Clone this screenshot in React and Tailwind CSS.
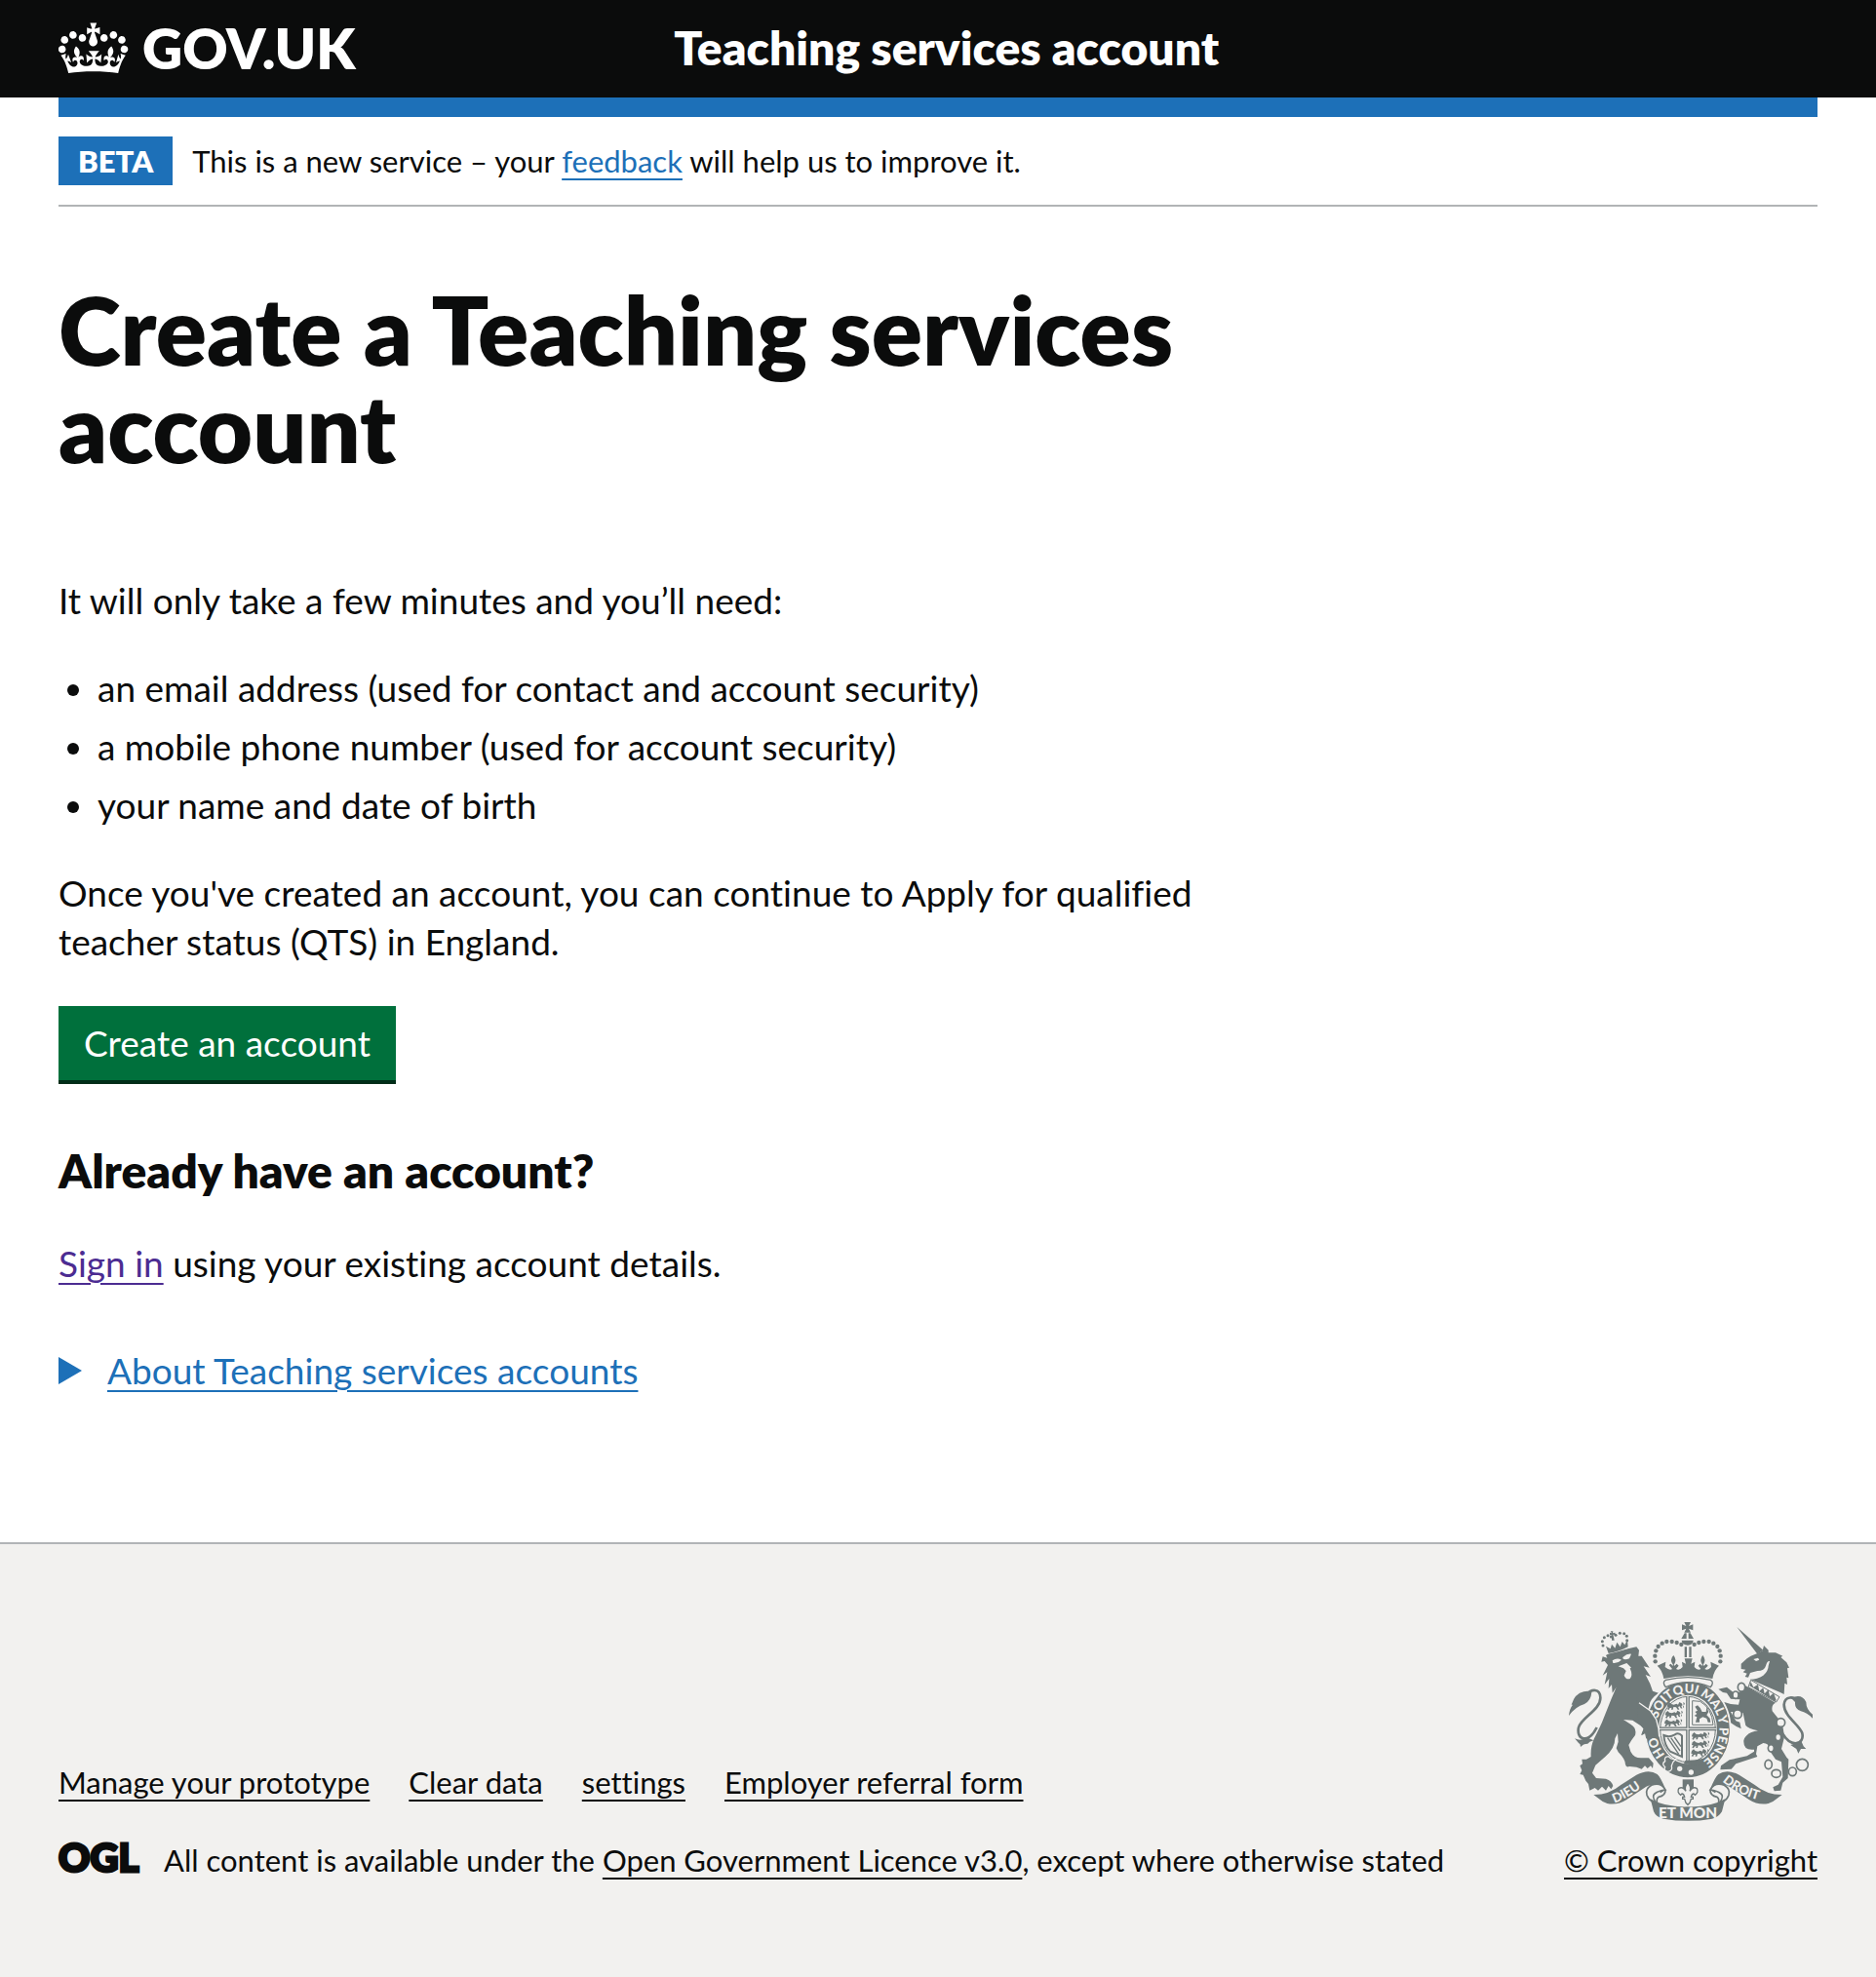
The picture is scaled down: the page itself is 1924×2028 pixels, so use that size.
const FOOTER_LINKS = ["Manage your prototype", "Clear data", "settings", "Employer referral form"];

const REQUIREMENTS = [
  "an email address (used for contact and account security)",
  "a mobile phone number (used for account security)",
  "your name and date of birth",
];

const link = "underline decoration-2 underline-offset-[6px]";

function Crown() {
  return (
    <svg className="h-16 w-[72px] shrink-0 fill-white" viewBox="0 1 36 32" aria-hidden="true">
      <path d="M6.7 12.2c1 .4 2.1-.1 2.5-1s-.1-2.1-1-2.5c-1-.4-2.1.1-2.5 1-.4 1 0 2.1 1 2.5m-4.3 2.5c1 .4 2.1-.1 2.5-1s-.1-2.1-1-2.5c-1-.4-2.1.1-2.5 1-.5 1 0 2.1 1 2.5m-1.3 4.8c1 .4 2.1-.1 2.5-1 .4-1-.1-2.1-1-2.5-1-.4-2.1.1-2.5 1-.4 1 0 2.1 1 2.5m10.4-5.8c1 .4 2.1-.1 2.5-1s-.1-2.1-1-2.5c-1-.4-2.1.1-2.5 1s0 2.1 1 2.5m17.4-1.5c-1 .4-2.1-.1-2.5-1s.1-2.1 1-2.5c1-.4 2.1.1 2.5 1 .5 1 0 2.1-1 2.5m4.3 2.5c-1 .4-2.1-.1-2.5-1s.1-2.1 1-2.5c1-.4 2.1.1 2.5 1 .5 1 0 2.1-1 2.5m1.3 4.8c-1 .4-2.1-.1-2.5-1-.4-1 .1-2.1 1-2.5 1-.4 2.1.1 2.5 1 .4 1 0 2.1-1 2.5m-10.4-5.8c-1 .4-2.1-.1-2.5-1s.1-2.1 1-2.5c1-.4 2.1.1 2.5 1s0 2.1-1 2.5m-5.3-4.9 2.4 1.3V6.5l-2.4.8c-.1-.1-.1-.1-.2-.1s1-3 1-3h-3.4l1 3c-.1.1-.2.1-.2.1-.1.1-2.4-.7-2.4-.7v3.5L17 8.8c-.1.1 0 .2.1.3l-1.4 4.2c-.1.2-.1.4-.1.7 0 1.1.8 2.1 1.9 2.2h.6C19.2 16 20 15.1 20 14c0-.2 0-.4-.1-.7l-1.4-4.2c.2-.1.3-.2.3-.3m-1 20.3c4.6 0 8.9.3 12.8.9 1.1-4.6 2.4-7.2 3.8-9.1l-2.6-.9c.3 1.3.3 1.9 0 2.8-.4-.4-.8-1.2-1.1-2.4l-1.2 4.2c.8-.5 1.3-.9 2-.9-1.2 2.6-2.7 3.2-3.6 3-1.2-.2-1.7-1.3-1.5-2.2.3-1.3 1.6-1.6 2.2-.1 1.2-2.4-.8-3.1-2.1-2.4 1.9-1.9 2.2-3.6.6-5.7-2.2 1.7-2.2 3.3-1.2 5.6-1.3-1.5-3.3-.7-2.5 1.7.9-1.4 2.1-.5 2 .8-.2 1.2-1.7 2.1-3.7 2-2.8-.2-3-2.2-3-3.7.7-.1 1.9.5 3 2l.4-4.4c-1.1 1.2-2.2 1.4-3.3 1.4.4-1.2 2.1-3.1 2.1-3.1h-5.5s1.8 2 2.1 3.1c-1.1 0-2.2-.3-3.3-1.4l.4 4.4c1.1-1.5 2.3-2.1 3-2-.1 1.6-.2 3.5-3 3.7-1.9.2-3.5-.8-3.7-2-.2-1.3 1-2.2 1.9-.8.7-2.4-1.3-3.1-2.6-1.7 1-2.3 1-4-1.2-5.6-1.6 2.1-1.3 3.8.6 5.7-1.3-.7-3.2 0-2.1 2.4.6-1.5 1.9-1.1 2.2.1.2.9-.4 1.9-1.5 2.2-1 .2-2.5-.5-3.6-3 .7 0 1.3.4 2 .9L5 20.4c-.3 1.2-.7 1.9-1.2 2.4-.3-.8-.2-1.5 0-2.8l-2.6.9C2.7 22.8 4 25.4 5.1 30c3.8-.6 8.2-.9 12.7-.9" />
    </svg>
  );
}

const ARCH_DOTS = [[320, 193], [319, 176], [322, 160], [329, 147], [341, 137], [355, 132], [371, 132], [386, 135], [400, 141]];

/* A walking lion, three of which fill a quarter of the shield. */
function SmallLion({ x, y }) {
  return (
    <path
      transform={`translate(${x} ${y})`}
      d="M2 6l6-5 5 5 8 2 8-3 5 3 4-8 7 4 3 6-4 2 3 8-5-1-3-6-5 2 4 8-5 0-5-7-8-1-2 8-5 0 1-6-6 2-2 5-5-2 4-7-5-1zM50 0q8 4 2 9t0 10"
      fill="#6e7878"
    />
  );
}

function RibbonEnd() {
  return (
    <g>
      <path d="M130 603Q178 603 215 572L262 542Q300 522 326 540Q336 548 352 588L336 598Q318 566 292 578L232 618Q204 636 172 630Q158 626 150 618Z" />
      <path d="M351 588Q336 562 308 574Q288 586 294 604Q302 624 322 628Q308 608 318 600Q330 590 351 588Z" fill="#f2f1ef" stroke="#6e7878" strokeWidth="5" />
      <path d="M351 588Q352 606 330 610Q322 616 326 630" fill="none" stroke="#6e7878" strokeWidth="5" />
    </g>
  );
}

function Crest() {
  return (
    <svg className="h-51 w-[250px]" viewBox="54 72 750 612" fill="#6e7878" aria-hidden="true">
      <defs>
        <path id="garter" d="M420 514A97 112 0 0 1 420 290A97 112 0 0 1 420 514" />
        <path id="dieu" d="M194 628Q232 618 306 560" />
        <path id="droit" d="M526 562Q586 612 662 624" />
      </defs>

      {/* Lion */}
      <path d="M140 396C112 450 76 432 84 396C92 366 152 342 151 304C150 276 124 276 108 296" fill="none" stroke="#6e7878" strokeWidth="8" />
      <path d="M54 360Q56 338 66 326L62 326Q72 292 100 286Q116 282 124 288Q122 314 102 324Q74 332 54 360Z" />
      <path d="M72 430Q92 440 108 426L130 436Q116 440 112 446Q98 446 90 456Q90 446 84 444Z" />
      <path d="M158 178L172 182 168 174 182 166 262 148 270 158 268 176 278 176 302 212 284 208 306 240 290 234 304 262 312 284 330 290Q304 308 302 326L300 348 322 376 326 396 300 418 292 430 290 414 278 420 284 400 274 390 250 374 222 372 244 386Q264 398 258 420 248 432 238 450L244 470Q254 490 276 490L300 490 314 506 312 522 306 514 296 522 288 514 278 524 262 518 240 516Q230 520 228 510 228 494 206 472L200 460 206 440 204 414 196 430Q196 460 166 486L136 512 126 536 138 552 168 554Q186 560 190 576L184 586 176 576 168 590 156 578 144 590 134 582 118 590 114 570 106 560 98 542 88 540 94 528 88 514 96 508 94 494 108 494 122 486Q120 456 132 430 146 402 156 380L184 310 200 272 188 290 186 264 176 276 178 246 164 264 172 226 158 236 174 204 164 192 154 194Z" />
      <path d="M158 170Q200 166 254 144" fill="none" stroke="#f2f1ef" strokeWidth="4" />
      <path d="M188 190Q202 180 216 188Q204 200 190 198ZM220 180Q234 168 246 170L240 184Q226 190 220 184ZM206 208L232 198 246 212 242 214Q252 236 242 246 230 250 224 236L230 222 222 214Z" fill="#f2f1ef" />
      <path d="M168 146L176 168Q206 164 236 148L234 126 226 142 218 132 212 148 202 134 196 152 186 140 182 154Z" />
      {[[159, 144], [157, 131], [163, 119], [174, 113], [184, 117], [198, 112], [211, 106], [224, 107], [232, 115], [233, 128]].map(([x, y]) => (
        <circle key={x} cx={x} cy={y} r="4.5" />
      ))}
      <path d="M180 104L186 106 182 100 190 100 189 106 196 104 197 111 190 110 192 118 194 128 186 128 186 112 180 112Z" />

      {/* Unicorn */}
      <path d="M571 87L652 158 634 170Z" />
      <path d="M650 160L654 144 668 158 668 166 690 166 712 176 706 180 724 196 732 212 726 214 730 244 724 242 726 264 718 260 716 294 704 288 612 248Q634 248 652 236 668 222 668 206L672 192Q664 190 660 206 656 222 634 222L612 228 606 242 596 240 602 230 590 226 598 218 584 216 584 200 602 184 614 176 634 168Z" />
      <path d="M622 186L636 182 640 188 630 192Z" fill="#f2f1ef" />
      <path d="M614 250L702 302 692 318 606 272Z" fill="#f2f1ef" stroke="#6e7878" strokeWidth="3" />
      <path d="M610 268L614 256 622 272 636 264 640 284 652 274 656 292 668 280 672 300 684 290 692 312 688 316Z" />
      <path d="M598 268L690 320Q676 326 680 346L706 378Q718 404 716 430L708 462 724 488 730 494 728 552 712 566 706 590 686 592 682 580 698 572 712 548 708 502 690 494 668 462Q672 446 652 444L634 454 630 478 634 486 568 508 554 524 520 526 522 514 548 496 602 484 624 470 624 464Q590 468 592 436 598 412 636 406 606 400 598 390L590 352 572 348 552 348 568 376 580 380 584 400 568 392 550 380 534 342 526 324 532 318 552 324 576 326 580 310 552 308 540 290 528 288 514 278 540 272 560 288Q584 290 590 280Z" />
      <path d="M710 412C738 462 780 448 772 414C764 388 716 362 716 326C718 298 748 300 758 316" fill="none" stroke="#6e7878" strokeWidth="8" />
      <path d="M738 306Q770 290 784 318Q784 340 804 356L804 368Q786 350 768 346Q748 340 750 318ZM736 450Q756 442 770 440L776 454 784 462 768 462 760 476 754 462Z" />
      <g fill="#f2f1ef" stroke="#6e7878" strokeWidth="5">
        <ellipse cx="585" cy="272" rx="11" ry="13" />
        <ellipse cx="567" cy="296" rx="9" ry="11" />
        <ellipse cx="573" cy="355" rx="13" ry="13" />
        <ellipse cx="706" cy="381" rx="13" ry="13" />
        <ellipse cx="698" cy="426" rx="9" ry="11" />
        <ellipse cx="676" cy="460" rx="9" ry="11" />
        <ellipse cx="668" cy="510" rx="11" ry="14" />
        <ellipse cx="692" cy="538" rx="14" ry="12" />
        <ellipse cx="742" cy="532" rx="12" ry="13" />
        <circle cx="772" cy="511" r="18" />
      </g>

      {/* Garter and shield */}
      <ellipse cx="420" cy="402" rx="131" ry="150" stroke="#f2f1ef" strokeWidth="5" />
      <ellipse cx="420" cy="402" rx="90" ry="106" fill="#f2f1ef" />
      <ellipse cx="420" cy="402" rx="85" ry="101" fill="none" stroke="#6e7878" strokeWidth="3" />
      <path d="M420 300V508M333 400H508" stroke="#6e7878" strokeWidth="11" />
      <path d="M420 300V508M333 400H508" stroke="#f2f1ef" strokeWidth="3" />
      <SmallLion x={356} y={318} />
      <SmallLion x={350} y={344} />
      <SmallLion x={348} y={370} />
      <SmallLion x={432} y={410} />
      <SmallLion x={432} y={436} />
      <SmallLion x={430} y={462} />
      <path d="M434 314V388H498Q494 336 458 316Z" fill="none" stroke="#6e7878" strokeWidth="3" />
      <path d="M442 332L450 328 458 336 464 348 476 348 478 334 484 348 478 358 488 368 490 380 482 380 478 368 466 364 456 370 456 380 444 380 448 364 440 360 448 354 442 348 450 344Z" />
      <path d="M346 420Q348 452 366 470L402 486 402 422Q392 410 380 418 364 428 346 420Z" fill="none" stroke="#6e7878" strokeWidth="6" />
      <path d="M358 428L392 478M368 428L396 468M379 426L399 455" stroke="#6e7878" strokeWidth="4" />
      <path d="M446 496L482 488 452 512 408 508 412 498Z" />
      <g className="fill-[#f2f1ef] font-['Lato'] text-[39px] font-black">
        <text><textPath href="#garter" startOffset="80">HO</textPath></text>
        <text><textPath href="#garter" startOffset="197">SOIT</textPath></text>
        <text><textPath href="#garter" startOffset="286">QUI</textPath></text>
        <text><textPath href="#garter" startOffset="366">MAL</textPath></text>
        <text><textPath href="#garter" startOffset="452">Y</textPath></text>
        <text><textPath href="#garter" startOffset="486">PENSE</textPath></text>
      </g>
      <path d="M262 304L304 344 322 370 328 398 330 424 322 430 314 416 308 432 300 418 292 432 288 414 276 420 284 400 268 380Z" />
      <path d="M270 320L306 346 323 372 330 400 332 424" fill="none" stroke="#f2f1ef" strokeWidth="4" />
      <path d="M350 500Q346 484 362 486Q366 494 382 494Q372 502 370 514Q374 530 358 532Q344 528 350 518Q338 508 350 500Z" stroke="#f2f1ef" strokeWidth="4" />
      <circle cx="395" cy="523" r="8" fill="#f2f1ef" />
      <circle cx="430" cy="534" r="8" fill="#f2f1ef" />

      {/* Crown */}
      <path d="M409 72H429L423 84 436 79V97L423 92 429 104H409L415 92 402 97V79L415 84Z" />
      <path d="M410 106H416V123H400ZM422 106H428L438 123H422Z" />
      <path d="M401 128H437Q436 142 420 143Q402 142 401 128Z" />
      <path d="M410 148H417V180H410ZM424 148H431V180H424Z" />
      {ARCH_DOTS.flatMap(([x, y]) => [
        <circle key={`l${x}`} cx={x} cy={y} r="6.5" />,
        <circle key={`r${x}`} cx={840 - x} cy={y} r="6.5" />,
      ])}
      <path d="M326 206L352 194 350 210Q364 222 372 216L362 204 368 200 373 206 375 204Q362 188 376 174Q388 188 377 204L379 206 386 200 392 206 384 216Q394 222 404 210L402 194 414 200 410 184H434L430 200 442 194 440 210Q450 222 460 216L452 206 458 200 463 206 465 204Q454 188 466 174Q478 188 467 204L470 206 476 200 482 206 472 216Q482 222 492 210L490 194 516 206Q500 220 496 246Q420 230 346 246Q342 220 326 206Z" />
      <path d="M352 272Q340 256 352 250Q420 234 490 250Q502 256 490 272Q420 242 352 272Z" fill="#f2f1ef" stroke="#6e7878" strokeWidth="4" />

      {/* Motto ribbon */}
      <RibbonEnd />
      <g transform="translate(840 0) scale(-1 1)">
        <RibbonEnd />
      </g>
      <path d="M305 616Q350 642 420 640Q490 642 535 616L525 655Q515 672 495 677Q420 690 345 677Q322 672 315 655Z" />
      <g className="fill-[#f2f1ef] font-['Lato'] text-[40px] font-black">
        <text><textPath href="#dieu">DIEU</textPath></text>
        <text><textPath href="#droit">DROIT</textPath></text>
        <text x="420" y="676" textAnchor="middle" className="text-[46px]">ET MON</text>
      </g>
      <path d="M404 556H438V586H404Z" />
      <path d="M420 566Q432 580 426 592Q436 576 448 584Q454 596 442 604L438 600Q432 600 430 610H436V616H430L426 628 420 634 414 628 410 616H404V610H410Q408 600 402 600L398 604Q386 596 392 584Q404 576 414 592Q408 580 420 566Z" fill="#f2f1ef" stroke="#6e7878" strokeWidth="4" />
    </svg>
  );
}

function OglLogo() {
  return (
    <svg className="-my-1 h-12 w-[82px] shrink-0 overflow-visible" viewBox="0 0 82 48" aria-hidden="true">
      <text x="0" y="36" className="fill-[#0b0c0c] stroke-[#0b0c0c] font-['Lato'] text-[40px] font-black" strokeWidth="3">
        OGL
      </text>
    </svg>
  );
}

export default function App() {
  return (
    <div className="flex min-h-screen flex-col bg-white font-['Lato',sans-serif] text-[37px] leading-[50px] text-[#0b0c0c] [font-variant-ligatures:none]">
      <header className="bg-[#0b0c0c] text-white">
        <div className="mx-[60px] flex h-[100px] items-center pb-[2px]">
          <a href="#" className="flex w-1/3 items-center gap-3.5 text-[57px] leading-none font-extrabold">
            <Crown />
            GOV.UK
          </a>
          <a href="#" className="pl-[30px] text-5xl font-extrabold">Teaching services account</a>
        </div>
      </header>

      <div className="mx-[60px] border-t-20 border-[#1d70b8]">
        <div className="flex items-center gap-5 border-b-2 border-[#b1b4b6] py-5 text-[31px] leading-10">
          <strong className="bg-[#1d70b8] px-5 py-[5px] font-extrabold text-white">BETA</strong>
          <p>
            This is a new service – your <a href="#" className={`${link} text-[#1d70b8]`}>feedback</a> will help us to improve it.
          </p>
        </div>
      </div>

      <main className="mx-[60px] w-2/3 max-w-[1200px] grow pt-[76px]">
        <h1 className="mb-[103px] text-[97px] leading-[100px] font-extrabold">Create a Teaching services account</h1>
        <p className="mb-10">It will only take a few minutes and you’ll need:</p>
        <ul className="mb-10 list-disc space-y-2.5 pl-10">
          {REQUIREMENTS.map((item) => (
            <li key={item}>{item}</li>
          ))}
        </ul>
        <p className="mb-[41px] pr-[30px]">
          Once you've created an account, you can continue to Apply for qualified teacher status (QTS) in England.
        </p>
        <button className="mb-[63px] block h-[76px] bg-[#00703c] px-[26px] text-white shadow-[0_4px_0_#002d18]">
          Create an account
        </button>
        <h2 className="mb-10 text-5xl leading-[60px] font-extrabold">Already have an account?</h2>
        <p className="mb-[60px]">
          <a href="#" className={`${link} text-[#4c2c92]`}>Sign in</a> using your existing account details.
        </p>
        <details>
          <summary className="flex cursor-pointer list-none items-center text-[#1d70b8]">
            <svg className="mr-[26px] h-[28px] w-6 fill-current" viewBox="0 0 24 28" aria-hidden="true">
              <path d="M0 0L24 14L0 28Z" />
            </svg>
            <span className={link}>About Teaching services accounts</span>
          </summary>
          <p className="mt-5 pl-[50px]">Use one account to sign in to Teaching services.</p>
        </details>
      </main>

      <footer className="flex items-end justify-between border-t-2 border-[#b1b4b6] bg-[#f2f1ef] px-[60px] pt-20 pb-[100px] text-[31px] leading-10">
        <div>
          <ul className="mb-10 flex gap-10">
            {FOOTER_LINKS.map((label) => (
              <li key={label}>
                <a href="#" className={link}>{label}</a>
              </li>
            ))}
          </ul>
          <div className="flex items-center gap-[26px]">
            <OglLogo />
            <p>
              All content is available under the <a href="#" className={link}>Open Government Licence v3.0</a>, except where
              otherwise stated
            </p>
          </div>
        </div>
        <a href="#" className={`${link} flex shrink-0 flex-col items-center gap-5`}>
          <Crest />
          © Crown copyright
        </a>
      </footer>
    </div>
  );
}
